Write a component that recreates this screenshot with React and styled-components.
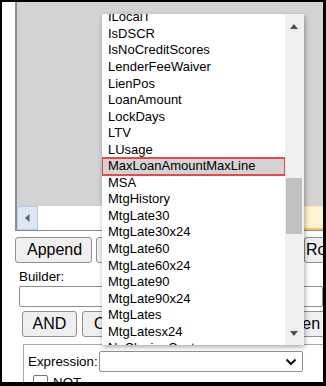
import React from "react";
import styled, { createGlobalStyle } from "styled-components";

const GlobalStyle = createGlobalStyle`
  html, body {
    margin: 0;
    padding: 0;
    background: #fff;
  }
  body {
    font-family: "Liberation Sans", Arial, sans-serif;
  }
`;

const fields = [
  "ILocalT",
  "IsDSCR",
  "IsNoCreditScores",
  "LenderFeeWaiver",
  "LienPos",
  "LoanAmount",
  "LockDays",
  "LTV",
  "LUsage",
  "MaxLoanAmountMaxLine",
  "MSA",
  "MtgHistory",
  "MtgLate30",
  "MtgLate30x24",
  "MtgLate60",
  "MtgLate60x24",
  "MtgLate90",
  "MtgLate90x24",
  "MtgLates",
  "MtgLatesx24",
  "NoClosingCost",
];

const Frame = styled.div`
  position: relative;
  width: 326px;
  height: 386px;
  box-sizing: border-box;
  border-style: solid;
  border-color: #000;
  border-width: 2px 3px 4px 2px;
  padding-left: 13px;
  background: #fff;
  overflow: hidden;
  font-family: "Liberation Sans", Arial, sans-serif;
  color: #000;
`;

const Panel = styled.div`
  height: 229px;
  box-sizing: border-box;
  display: flex;
  flex-direction: column;
  background: #d3d3d3;
  border-left: 2px solid #8e8e8e;
  border-bottom: 1px solid #8e8e8e;
`;

const PanelBody = styled.div`
  flex: 1;
`;

const HScroll = styled.div`
  height: 24px;
  display: flex;
  background: #fff;
`;

const ScrollBtn = styled.div`
  width: 21px;
  box-sizing: border-box;
  display: flex;
  align-items: center;
  justify-content: center;
  background: #dce7f5;
  border: 1px solid #b4c8e2;
`;

const Track = styled.div`
  flex: 1;
`;

const Thumb = styled.div`
  width: 90px;
  box-sizing: border-box;
  background: #fff4cf;
  border-top: 1px solid #fde9a8;
  border-bottom: 2px solid #f2c45a;
`;

const ButtonRow = styled.div`
  display: flex;
  gap: ${(p) => p.$gap || 4}px;
  margin-top: ${(p) => p.$top || 0}px;
  margin-left: ${(p) => p.$left || 0}px;
  white-space: nowrap;
`;

const Button = styled.div`
  flex: none;
  width: ${(p) => p.$w}px;
  height: 26px;
  box-sizing: border-box;
  display: flex;
  align-items: center;
  padding-left: ${(p) => (p.$pad != null ? p.$pad : 11)}px;
  background: #efefef;
  border: 1px solid #8f8f8f;
  border-radius: 3px;
  font-size: 16px;
  ${(p) => (p.$center ? "justify-content: center; padding-left: 0;" : "")}
`;

const Label = styled.div`
  font-size: 13.33px;
  line-height: 15px;
  margin: ${(p) => p.$m || "0"};
`;

const TextInput = styled.div`
  margin: 2px 0 0 4px;
  height: 21px;
  box-sizing: border-box;
  border: 1px solid #8f8f8f;
  border-radius: 2px;
  background: #fff;
`;

const Fieldset = styled.div`
  margin: 7px 0 0 8px;
  padding: 6px 0 0 4px;
  height: 60px;
  border: 1px solid #a9a9a9;
  border-right: none;
`;

const ExprRow = styled.div`
  display: flex;
  align-items: center;
  gap: 1px;
`;

const Select = styled.div`
  width: 204px;
  height: 21px;
  box-sizing: border-box;
  display: flex;
  align-items: center;
  justify-content: flex-end;
  padding-right: 5px;
  border: 1px solid #8f8f8f;
  border-radius: 2px;
  background: #fff;
`;

const CheckRow = styled.div`
  display: flex;
  align-items: center;
  gap: 5px;
  margin: 3px 0 0 5px;
  font-size: 13.33px;
`;

const Checkbox = styled.div`
  width: 13px;
  height: 13px;
  border: 1px solid #767676;
  border-radius: 2px;
  background: #fff;
`;

const Dropdown = styled.div`
  position: absolute;
  left: 100px;
  top: 12px;
  width: 202px;
  height: 331px;
  display: flex;
  background: #fff;
  box-shadow: 1px 2px 5px rgba(0, 0, 0, 0.35);
`;

const List = styled.div`
  flex: 1;
  overflow: hidden;
`;

const ListInner = styled.div`
  margin-top: -4.7px;
`;

const Item = styled.div`
  height: 16.55px;
  line-height: 16.55px;
  padding-left: 6px;
  font-size: 13px;
  white-space: nowrap;
  ${(p) =>
    p.$active
      ? "background: #d3d3d3; outline: 2px solid #e8484c; outline-offset: -1px;"
      : ""}
`;

const VScroll = styled.div`
  width: 19px;
  position: relative;
  background: #f0f0f0;
`;

const Arrow = styled.div`
  position: absolute;
  left: 5px;
  width: 0;
  height: 0;
  border-left: 4.5px solid transparent;
  border-right: 4.5px solid transparent;
  ${(p) =>
    p.$down
      ? "bottom: 9px; border-top: 5px solid #505050;"
      : "top: 10px; border-bottom: 5px solid #505050;"}
`;

const VThumb = styled.div`
  position: absolute;
  left: 1px;
  right: 2px;
  top: 164px;
  height: 56px;
  background: #c1c1c1;
`;

const Chevron = () => (
  <svg width="12" height="8" viewBox="0 0 12 8">
    <polyline
      points="1.5,1.5 6,6 10.5,1.5"
      fill="none"
      stroke="#111"
      strokeWidth="2"
    />
  </svg>
);

const LeftArrow = () => (
  <svg width="5" height="8" viewBox="0 0 5 8">
    <polygon points="4.5,0 0,4 4.5,8" fill="#606060" />
  </svg>
);

export default function App() {
  return (
    <>
      <GlobalStyle />
      <Frame>
        <Panel>
          <PanelBody />
          <HScroll>
            <ScrollBtn>
              <LeftArrow />
            </ScrollBtn>
            <Track />
            <Thumb />
          </HScroll>
        </Panel>
        <ButtonRow $top={6}>
          <Button $w={77}>Append</Button>
          <Button $w={204}>Insert</Button>
          <Button $w={80} $pad={1}>
            Row
          </Button>
        </ButtonRow>
        <Label $m="6px 0 0 4px">Builder:</Label>
        <TextInput />
        <ButtonRow $top={4} $left={7} $gap={5}>
          <Button $w={55} $center>
            AND
          </Button>
          <Button $w={182}>OR</Button>
          <Button $w={80}>Open</Button>
        </ButtonRow>
        <Fieldset>
          <ExprRow>
            <Label>Expression:</Label>
            <Select>
              <Chevron />
            </Select>
          </ExprRow>
          <CheckRow>
            <Checkbox />
            NOT
          </CheckRow>
        </Fieldset>
        <Dropdown>
          <List>
            <ListInner>
              {fields.map((f) => (
                <Item key={f} $active={f === "MaxLoanAmountMaxLine"}>
                  {f}
                </Item>
              ))}
            </ListInner>
          </List>
          <VScroll>
            <Arrow />
            <VThumb />
            <Arrow $down />
          </VScroll>
        </Dropdown>
      </Frame>
    </>
  );
}
